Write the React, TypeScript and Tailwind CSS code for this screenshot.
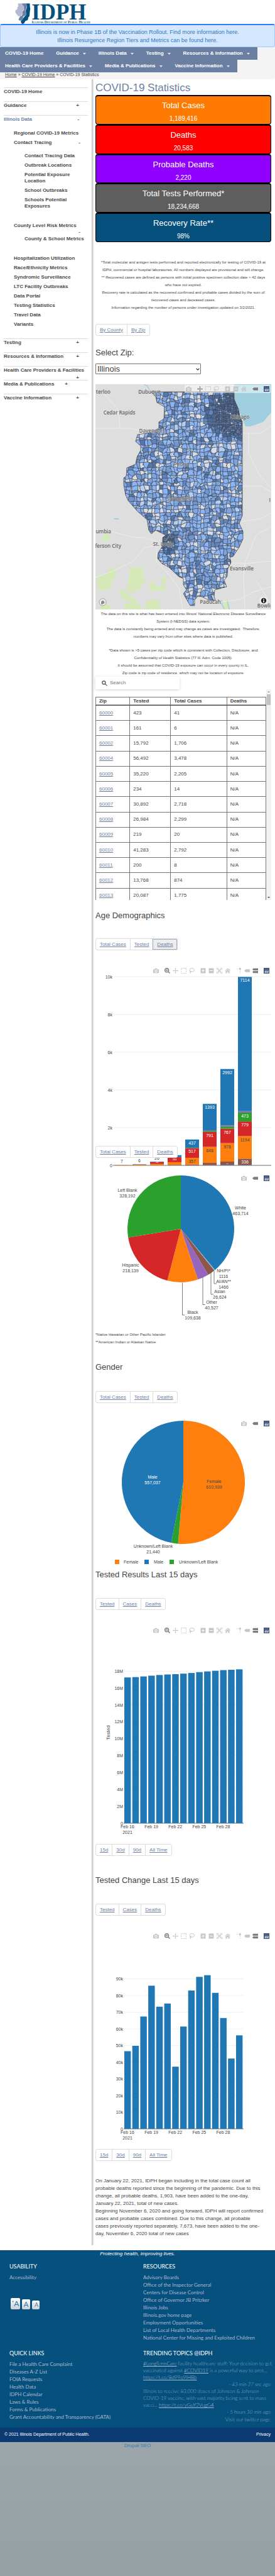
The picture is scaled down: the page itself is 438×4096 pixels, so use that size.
import React from "react";

const BLUE = "#1f77b4";
const ORANGE = "#ff7f0e";
const GREEN = "#2ca02c";
const RED = "#d62728";
const PURPLE = "#9467bd";
const BROWN = "#8c564b";

/* ---------- Header ---------- */

function Logo() {
  return (
    <svg viewBox="0 0 720 205" className="block h-[38px] w-[134px]" role="img" aria-label="IDPH, Illinois Department of Public Health">
      <path d="M98 30H163L164 60L167 75L164 95L160 138L150 150L145 172L126 180L112 202L98 205L88 196L86 180L96 165L112 150L128 128L122 112L130 85L138 62L126 42Z" fill="#05507d" />
      <path d="M84 30H130L138 52L134 72L126 90L132 118L128 132L108 142L104 160L92 176L76 178L66 168L72 152L80 140L58 138L60 134L92 136L100 120L94 104L112 84L110 60Z" fill="#6b7fa6" stroke="#e6e9f2" strokeWidth="2" />
      <path d="M60 30H96L94 38L110 52L112 84L96 96L100 118L84 137L60 134L48 122L37 102L40 88L56 78L54 68L64 52Z" fill="#b4b9d2" stroke="#e6e9f2" strokeWidth="2" />
      <text x="178" y="166" fontSize="188" fontWeight="700" fill="#05507d" fontFamily="Liberation Serif, serif">IDPH</text>
      <text x="179" y="200" fontSize="30" fontWeight="700" fill="#2a6389" fontFamily="Liberation Serif, serif" style={{ fontVariant: "small-caps" }}>
        Illinois Department of Public Health
      </text>
    </svg>
  );
}

const navItems = [
  { label: "COVID-19 Home", sub: false },
  { label: "Guidance", sub: true },
  { label: "Illinois Data", sub: true },
  { label: "Testing", sub: true },
  { label: "Resources & Information", sub: true },
  { label: "Health Care Providers & Facilities", sub: true },
  { label: "Media & Publications", sub: true },
  { label: "Vaccine Information", sub: true },
];

function Header() {
  return (
    <header>
      <div className="h-[38px] pl-[17px]">
        <Logo />
      </div>
      <div className="h-[37px] rounded-[3px] border border-t-2 border-[#9ec8fb] border-t-[#2f7bff] bg-[#d4e7ff] pt-[5px] text-center text-[9px] leading-[13px] text-[#337ab7]">
        <a href="#vaccination" className="block">Illinois is now in Phase 1B of the Vaccination Rollout. Find more information here.</a>
        <a href="#regions" className="block">Illinois Resurgence Region Tiers and Metrics can be found here.</a>
      </div>
      <div className="rounded-b-[3px] bg-[#f4f4f4]">
        <nav aria-label="Main">
          <ul className="flex flex-wrap">
            {navItems.map((n) => (
              <li key={n.label} className="bg-[#6b7fa3]">
                <a href="#menu" className="flex h-[20px] items-center pr-[12px] pl-[8px] text-[8px] font-bold whitespace-nowrap text-white">
                  {n.label}
                  {n.sub && (
                    <svg viewBox="0 0 10 6" className="ml-[6px] h-[3px] w-[5px]" aria-hidden="true">
                      <path d="M0 0H10L5 6Z" fill="#e6e6ee" />
                    </svg>
                  )}
                </a>
              </li>
            ))}
          </ul>
        </nav>
        <p className="h-[11px] pl-[8px] text-[7px] leading-[8px] text-[#444]">
          <a href="#home" className="underline">Home</a> » <a href="#covid" className="underline">COVID-19 Home</a> » COVID-19 Statistics
        </p>
      </div>
    </header>
  );
}

/* ---------- Sidebar ---------- */

function TopItem({ label, sign, active, near }: { label: string; sign?: string; active?: boolean; near?: boolean }) {
  return (
    <div className={"h-[22px] border-t border-[#ddd] text-[8px] leading-[12px] font-bold " + (active ? "text-[#6b7fa3]" : "text-[#4a4a4a]")}>
      <div className={"flex flex-wrap justify-between " + (near ? "pr-[32px]" : "pr-[14px]")}>
        <a href="#section" className="whitespace-nowrap">{label}</a>
        {sign && <span className="ml-auto text-[#4a4a4a]">{sign}</span>}
      </div>
    </div>
  );
}

function Sidebar() {
  const link = "block";
  return (
    <aside className="w-1/3 shrink-0 pt-[13px] pr-[6px] pl-[6px]">
      <TopItem label="COVID-19 Home" />
      <TopItem label="Guidance" sign="+" />
      <TopItem label="Illinois Data" sign="-" active />
      <ul className="mt-[2px] mb-[17px] flex flex-col gap-[5px] pl-[16px] text-[8px] leading-[10px] font-bold text-[#4a4a4a]">
        <li><a href="#x" className={link}>Regional COVID-19 Metrics</a></li>
        <li>
          <div className="flex justify-between pr-[12px]"><a href="#x">Contact Tracing</a><span>-</span></div>
          <ul className="mt-[11px] mb-[16px] flex flex-col gap-[5px] pl-[17px]">
            <li><a href="#x" className={link}>Contact Tracing Data</a></li>
            <li><a href="#x" className={link}>Outbreak Locations</a></li>
            <li><a href="#x" className={link}>Potential Exposure<br />Location</a></li>
            <li><a href="#x" className={link}>School Outbreaks</a></li>
            <li><a href="#x" className={link}>Schools Potential<br />Exposures</a></li>
          </ul>
        </li>
        <li>
          <a href="#x" className={link}>County Level Risk Metrics</a>
          <div className="pr-[12px] text-right">-</div>
          <ul className="mt-px mb-[16px] pl-[17px]">
            <li><a href="#x" className="block whitespace-nowrap">County &amp; School Metrics</a></li>
          </ul>
        </li>
        {["Hospitalization Utilization", "Race/Ethnicity Metrics", "Syndromic Surveillance", "LTC Facility Outbreaks", "Data Portal", "Testing Statistics", "Travel Data", "Variants"].map((t) => (
          <li key={t}><a href="#x" className={link}>{t}</a></li>
        ))}
      </ul>
      <TopItem label="Testing" sign="+" />
      <TopItem label="Resources & Information" sign="+" />
      <TopItem label="Health Care Providers & Facilities" sign="+" />
      <TopItem label="Media & Publications" sign="+" near />
      <TopItem label="Vaccine Information" sign="+" />
    </aside>
  );
}

/* ---------- Small shared parts ---------- */

function ButtonGroup({ items, active, className }: { items: string[]; active?: string; className?: string }) {
  return (
    <div className={"flex h-[19px] w-fit rounded-[3px] border border-[#ddd] bg-white " + (className ?? "")}>
      {items.map((t, i) => (
        <a
          key={t}
          href="#data"
          className={
            "flex items-center px-[6px] text-[8px] text-[#6b7fa3] underline " +
            (i > 0 ? "border-l border-[#ddd] " : "") +
            (active === t ? "bg-[#eee] outline-1 outline-dotted -outline-offset-1 outline-[#5a6c92]" : "")
          }
        >
          {t}
        </a>
      ))}
    </div>
  );
}

type IconName = "camera" | "zoom" | "pan" | "box" | "lasso" | "in" | "out" | "auto" | "home" | "spike" | "closest" | "compare" | "logo";

function Icon({ name }: { name: IconName }) {
  switch (name) {
    case "camera":
      return (
        <>
          <path fillRule="evenodd" d="M1 4H4.5L5.5 1.5H10.5L11.5 4H15Q16 4 16 5V13.5Q16 14.5 15 14.5H1Q0 14.5 0 13.5V5Q0 4 1 4ZM8 5A4 4 0 1 0 8 13A4 4 0 1 0 8 5Z" />
          <circle cx="8" cy="9" r="2.2" />
        </>
      );
    case "zoom":
      return (
        <>
          <path fillRule="evenodd" d="M6.5 0A6.5 6.5 0 1 0 6.5 13A6.5 6.5 0 1 0 6.5 0ZM3 3H10V10H3Z" />
          <path d="M4.6 4.6H8.4V8.4H4.6Z" />
          <path d="M10 12L12 10L16 14L14.2 16Z" />
        </>
      );
    case "pan":
      return <path d="M8 0L10.6 3H8.8V7.2H13V5.4L16 8L13 10.6V8.8H8.8V13H10.6L8 16L5.4 13H7.2V8.8H3V10.6L0 8L3 5.4V7.2H7.2V3H5.4Z" />;
    case "box":
      return <path d="M0 0H2V2H0ZM4 0H6V2H4ZM8 0H10V2H8ZM11 0H13V2H11ZM14 0H16V2H14ZM0 4H2V6H0ZM14 4H16V6H14ZM0 9H2V11H0ZM14 9H16V11H14ZM0 14H2V16H0ZM4 14H6V16H4ZM8 14H10V16H8ZM11 14H13V16H11ZM14 14H16V16H14Z" />;
    case "lasso":
      return (
        <g fill="none" stroke="currentColor" strokeWidth="1.7">
          <ellipse cx="8.5" cy="6" rx="6.6" ry="5" />
          <circle cx="4" cy="10.5" r="1.8" />
          <path d="M4 12Q5 14 3.5 16" />
        </g>
      );
    case "in":
      return <path fillRule="evenodd" d="M1 1H15V15H1ZM7 4V7H4V9H7V12H9V9H12V7H9V4Z" />;
    case "out":
      return <path fillRule="evenodd" d="M1 1H15V15H1ZM4 7V9H12V7Z" />;
    case "auto":
      return (
        <>
          <path d="M0 0H5V1.5H1.5V5H0ZM11 0H16V5H14.5V1.5H11ZM0 11H1.5V14.5H5V16H0ZM14.5 11H16V16H11V14.5H14.5Z" />
          <path d="M3 3H7L5.8 4.4L8 6.6L10.2 4.4L9 3H13V7L11.6 5.8L9.4 8L11.6 10.2L13 9V13H9L10.2 11.6L8 9.4L5.8 11.6L7 13H3V9L4.4 10.2L6.6 8L4.4 5.8L3 7Z" />
        </>
      );
    case "home":
      return <path d="M8 1L11.5 4.4V2H13.5V6.2L16 8.8L15 9.8L8 3.4L1 9.8L0 8.8ZM8 5L13.5 10V15H9.6V10.8H6.4V15H2.5V10Z" />;
    case "spike":
      return <path d="M1 2H3V4H1ZM5 2H7V4H5ZM9 3A2.4 2.4 0 1 1 13.5 3A2.4 2.4 0 1 1 9 3ZM10.5 8H12.5V10H10.5ZM10.5 12.5H12.5V14.5H10.5Z" />;
    case "closest":
      return <path d="M0 8L4 4H16V12H4Z" />;
    case "compare":
      return <path d="M0 4.5L2.5 1.5H16V7H2.5ZM0 12L2.5 9H16V14.5H2.5Z" />;
    case "logo":
      return (
        <>
          <rect width="16" height="16" fill="#3f4f75" />
          <path d="M3 9H4.6V14H3ZM6 7H7.6V14H6ZM9 9H10.6V14H9ZM12 7H13.6V14H12Z" fill="#fff" />
          <path d="M3 3H4.4V4.4H3ZM6 3H7.4V4.4H6ZM9 3H10.4V4.4H9ZM12 3H13.4V4.4H12ZM3 6H4.4V7.4H3ZM9 6H10.4V7.4H9Z" fill="#9fc5d8" />
        </>
      );
  }
}

const fullBar: IconName[][] = [["camera"], ["zoom", "pan", "box", "lasso"], ["in", "out", "auto", "home"], ["spike", "closest", "compare"], ["logo"]];
const mapBar: IconName[][] = [["camera"], ["pan", "box", "lasso"], ["in", "out", "home"], ["closest"], ["logo"]];
const pieBar: IconName[][] = [["camera"], ["closest"], ["logo"]];

function Modebar({ groups, on, className }: { groups: IconName[][]; on: IconName[]; className: string }) {
  return (
    <div className={"absolute right-[1px] flex gap-[5px] " + className}>
      {groups.map((g, i) => (
        <div key={i} className="flex">
          {g.map((n) => (
            <button key={n} type="button" aria-label={n} className={"flex h-[13px] items-center px-[2px] " + (on.includes(n) ? "text-[#7c7c7c]" : "text-[#c6c6c6]")}>
              <svg viewBox="0 0 16 16" fill="currentColor" className="h-[9px] w-[9px]"><Icon name={n} /></svg>
            </button>
          ))}
        </div>
      ))}
    </div>
  );
}

const chartText = "[&_text]:text-[7px]";

function T({ x, y, children, fill = "#444", anchor = "middle" }: { x: number; y: number; children: React.ReactNode; fill?: string; anchor?: "start" | "middle" | "end" }) {
  return <text x={x} y={y} dy="2.5" textAnchor={anchor} fill={fill}>{children}</text>;
}

/* ---------- Stat cards ---------- */

const cards = [
  { label: "Total Cases", value: "1,189,416", bg: "bg-[#ff7a00]" },
  { label: "Deaths", value: "20,583", bg: "bg-[#ff0000]" },
  { label: "Probable Deaths", value: "2,220", bg: "bg-[#9000ff]" },
  { label: "Total Tests Performed*", value: "18,234,668", bg: "bg-[#5e5e5e]" },
  { label: "Recovery Rate**", value: "98%", bg: "bg-[#05507d]" },
];

/* ---------- Zip map ---------- */

const outline =
  "M88 12L221 12L221 24L228 40L230 51L234 60L234 209L229 221L235 234L235 246L229 259L219 274L214 275L216 283L211 293L210 305L205 312L209 322L190 327L189 337L191 344L180 343L170 338L163 337L158 343L158 352L151 352L140 333L145 327L140 319L140 309L133 306L117 291L106 285L99 277L100 268L107 257L107 244L112 240L96 232L89 238L85 232L82 215L67 202L52 185L48 176L45 160L45 149L49 146L50 133L64 127L66 116L72 105L72 98L64 91L67 80L88 77L101 70L101 60L109 55L110 36L98 29L96 20Z";

function rnd(a: number, b: number, k: number) {
  const s = Math.sin(a * 127.1 + b * 311.7 + k * 74.7) * 43758.5453;
  return s - Math.floor(s);
}

function buildZips(size: number, salt: number, inside: (x: number, y: number) => boolean) {
  const cells: { d: string; fill: string }[] = [];
  const light = ["#d3dcec", "#b4cdf2", "#8ab4f8", "#8ab4f8", "#8ab4f8", "#8ab4f8", "#7ba4e2", "#7ba4e2", "#6f94d0", "#d8dde6", "#5f86c0", "#5378ae"];
  const dark = ["#4a6da3", "#5378ae", "#4a6da3", "#5f86c0", "#45659a"];
  const v = (i: number, j: number) => [(i + (rnd(i, j, salt) - 0.5) * 0.75) * size, (j + (rnd(i, j, salt + 1) - 0.5) * 0.75) * size];
  const mid = (a: number[], b: number[], i: number, j: number, k: number) => {
    const q = rnd(i, j, salt + k) > 0.5;
    const mx = a[0] * 0.5 + b[0] * 0.5;
    const my = a[1] * 0.5 + b[1] * 0.5;
    const w = (rnd(i, j, salt + k + 1) - 0.5) * size * 0.7;
    return q ? `L${(mx + w).toFixed(1)} ${(my - w * 0.2).toFixed(1)}L${(mx + w).toFixed(1)} ${(my + w * 0.5).toFixed(1)}` : `L${mx.toFixed(1)} ${(my + w).toFixed(1)}`;
  };
  const rev = (m: string) => m.split("L").filter(Boolean).reverse().map((p) => "L" + p).join("");
  const p = (a: number[]) => `${a[0].toFixed(1)} ${a[1].toFixed(1)}`;
  for (let j = 0; j * size < 356; j++) {
    for (let i = 0; i * size < 240; i++) {
      const cx = (i + 0.5) * size;
      const cy = (j + 0.5) * size;
      if (!inside(cx, cy)) continue;
      const a = v(i, j), b = v(i + 1, j), c = v(i + 1, j + 1), e = v(i, j + 1);
      const top = mid(a, b, i, j, 5);
      const right = mid(b, c, i + 1, j, 9);
      const bottom = rev(mid(e, c, i, j + 1, 5));
      const left = rev(mid(a, e, i, j, 9));
      const near = Math.hypot(cx - 222, cy - 45) < 46 || Math.hypot(cx - 115, cy - 252) < 18;
      const set = near && rnd(i, j, 33) > 0.15 ? dark : light;
      cells.push({ d: `M${p(a)}${top}L${p(b)}${right}L${p(c)}${bottom}L${p(e)}${left}Z`, fill: set[Math.floor(rnd(i, j, salt + 17) * set.length)] });
    }
  }
  return cells;
}

const dense = (x: number, y: number) => (Math.hypot((x - 222) / 0.9, y - 46) < 36 && x > 190) || Math.hypot(x - 114, y - 253) < 12;
const zips = [...buildZips(6, 3, () => true), ...buildZips(3, 8, dense)];

const cities: [string, number, number, "start" | "middle" | "end"][] = [
  ["terloo", 24, 12, "end"],
  ["Dubuque", 86, 12, "middle"],
  ["Cedar Rapids", 38, 45, "middle"],
  ["Davenport", 90, 74, "middle"],
  ["Chicago", 230, 52, "middle"],
  ["Peoria", 137, 127, "middle"],
  ["Springfield", 134, 182, "middle"],
  ["umbia", 25, 234, "end"],
  ["ferson City", 41, 257, "end"],
  ["St. Louis", 108, 254, "middle"],
  ["Evansville", 233, 293, "middle"],
  ["Paducah", 183, 346, "middle"],
  ["Bowli", 279, 352, "end"],
  ["I", 279, 184, "end"],
];

function ZipMap() {
  return (
    <div className="relative mt-[16px] overflow-hidden bg-[#dedede]">
      <svg viewBox="0 0 280 358" className="block w-full" role="img" aria-label="Map of cases by zip code">
        <clipPath id="state"><path d={outline} /></clipPath>
        <path d="M221 0H280V45L267 60L247 67L239 67L228 40L221 24Z" fill="#9fcfdf" />
        <path d="M77 0L83 3L86 9M200 343L208 358" stroke="#9fcfdf" strokeWidth="1.5" fill="none" />
        <path d="M29 213H37V215H30Z" fill="#9fcfdf" />
        <g fill="#d4e8b8">
          <path d="M14 237L23 239V247L15 250L10 249L12 243Z" />
          <path d="M20 293H32V309L26 312L24 325H16L11 330L3 322V303L18 303L20 300Z" />
          <path d="M55 291H76V309L81 315L73 318V327H63L61 332H55L50 325L54 305Z" />
          <path d="M86 316L90 313L97 322H106V308L113 306L110 321L113 328H86Z" />
          <path d="M38 325L50 330L54 338L65 342L68 349L75 356L70 358H46L46 349H54L57 347L44 342L39 332Z" />
          <path d="M80 349L85 343H102V354L106 358H80Z" />
          <path d="M7 358V354L14 350H23V355L26 358Z" />
          <path d="M202 345L209 344L212 358H205Z" />
        </g>
        <path d="M198 345L206 358M210 344L213 358" stroke="#9fcfdf" strokeWidth="1.5" fill="none" />
        <g fill="none" stroke="#f2f2f2" strokeWidth="0.7">
          <path d="M0 70H55L80 76L100 76M14 16L36 40L39 70" />
          <path d="M0 307L30 296L60 282L78 260L101 256M24 234L60 243L78 244L98 250M98 258L97 282L115 300L133 324L139 358" />
          <path d="M234 78H262L280 66M244 78V110L262 145L280 165M234 162H265L280 172M234 218L262 214L280 205" />
          <path d="M216 284L240 285L280 281M280 226L256 240L238 284L236 306L238 358M190 348L230 342L252 330L280 322M256 312L280 350" />
        </g>
        <g clipPath="url(#state)">
          <rect width="280" height="358" fill="#b8b8b8" />
          <g stroke="#454545" strokeWidth="0.6">
            {zips.map((z, i) => <path key={i} d={z.d} fill={z.fill} />)}
          </g>
        </g>
        <path d={outline} fill="none" stroke="#484848" strokeWidth="0.7" />
        <g fill="none" stroke="#fff" strokeOpacity="0.45" strokeWidth="0.5">
          <path d="M100 90L160 93L190 92L214 68L234 60M166 20L164 110L158 150M101 64L144 56L190 62L225 62M172 32L210 44L228 56" />
          <path d="M102 80V130L130 140L165 152L175 140L205 68M165 152L142 176L134 215L112 250M52 188L108 190L140 185M198 80L197 200L180 235L166 255L166 300L180 343" />
          <path d="M107 246L140 240L200 215L234 209M112 256L150 272L210 277" />
        </g>
        <g fontFamily="Open Sans, Noto Sans, sans-serif" fontWeight="600" fill="#666" stroke="#e2e2e2" strokeWidth="1" paintOrder="stroke" strokeOpacity="0.6" className="[&_text]:text-[8px]">
          {cities.map(([n, x, y, a]) => <text key={n} x={x} y={y} dy="3" textAnchor={a}>{n}</text>)}
        </g>
        <circle cx="11.500" cy="346.500" r="5.500" fill="#f4f4f4" stroke="#8a8a8a" strokeWidth="0.8" />
        <path d="M9 350V346A2.800 2.800 0 1 1 12 349.500Z" fill="#8a8a8a" />
        <circle cx="268" cy="344" r="6.500" fill="#fff" fillOpacity="0.5" />
        <circle cx="268" cy="344" r="4.200" fill="#222" />
        <path d="M267.200 343.500H268.800V346.900H267.200ZM267.200 341.100H268.800V342.500H267.200Z" fill="#fff" />
      </svg>
      <Modebar groups={mapBar} on={["pan", "closest"]} className="top-[1px] bg-white/50" />
    </div>
  );
}

/* ---------- Table ---------- */

const zipRows = [
  ["60000", "423", "41"], ["60001", "161", "6"], ["60002", "15,792", "1,706"], ["60004", "56,492", "3,478"],
  ["60005", "35,220", "2,205"], ["60006", "234", "14"], ["60007", "30,892", "2,718"], ["60008", "26,984", "2,299"],
  ["60009", "219", "20"], ["60010", "41,283", "2,792"], ["60011", "200", "8"], ["60012", "13,768", "874"],
  ["60013", "20,087", "1,775"],
];

function ZipTable() {
  const cell = "border border-[#777] pl-[5px]";
  const head = "border border-[#777] border-b-[#444] pl-[5px] shadow-[inset_0_-1px_0_#aaa]";
  return (
    <div className="flex h-[335px] overflow-hidden">
      <div className="min-w-0 flex-1 pt-[12px]">
        <table className="h-[329px] w-full table-fixed border-collapse text-left text-[8px] text-[#444]">
          <colgroup><col className="w-[20%]" /><col className="w-[24%]" /><col className="w-[33%]" /><col className="w-[23%]" /></colgroup>
          <thead>
            <tr><th className={head}>Zip</th><th className={head}>Tested</th><th className={head}>Total Cases</th><th className={head}>Deaths</th></tr>
          </thead>
          <tbody>
            {zipRows.map(([z, t, c]) => (
              <tr key={z}>
                <td className={cell}><a href="#zip" className="text-[#6b7fa3] underline">{z}</a></td>
                <td className={cell}>{t}</td>
                <td className={cell}>{c}</td>
                <td className={cell}>N/A</td>
              </tr>
            ))}
          </tbody>
        </table>
      </div>
      <div className="flex w-[8px] flex-col items-center justify-between bg-[#f1f1f1] py-[3px]">
        <div className="flex flex-col items-center gap-[3px]">
          <svg viewBox="0 0 4 2" className="h-[2px] w-[4px]"><path d="M0 2H4L2 0Z" fill="#999" /></svg>
          <div className="h-[17px] w-[6px] bg-[#c1c1c1]" />
        </div>
        <svg viewBox="0 0 4 2" className="h-[2px] w-[4px]"><path d="M0 0H4L2 2Z" fill="#444" /></svg>
      </div>
    </div>
  );
}

/* ---------- Charts ---------- */

const stacks: [number, string][][] = [
  [[22, ORANGE]],
  [[35, ORANGE], [16, RED], [10, BLUE]],
  [[75, ORANGE], [108, RED], [20, BLUE]],
  [[25, BROWN], [145, ORANGE], [263, RED], [8, GREEN], [100, BLUE]],
  [[45, BROWN], [357, ORANGE], [517, RED], [15, GREEN], [437, BLUE]],
  [[12, BLUE], [120, BROWN], [848, ORANGE], [791, RED], [60, GREEN], [36, PURPLE], [1393, BLUE]],
  [[20, BLUE], [180, BROWN], [978, ORANGE], [767, RED], [117, GREEN], [54, PURPLE], [2992, BLUE]],
  [[20, BLUE], [336, BROWN], [1194, ORANGE], [779, RED], [473, GREEN], [72, PURPLE], [7114, BLUE]],
];

function AgeChart() {
  return (
    <svg viewBox="0 0 280 328" className={"block w-full " + chartText} role="img" aria-label="Deaths by age group">
      {[0, 2, 4, 6, 8, 10].map((k) => (
        <g key={k}>
          <path d={`M28 ${321 - k * 30}H280`} stroke={k ? "#eee" : "#444"} strokeWidth={k ? 1 : 0.8} />
          <T x={27} y={321 - k * 30} anchor="end">{k ? `${k}k` : "0"}</T>
        </g>
      ))}
      {stacks.map((s, i) => {
        const x = 31 + i * 28;
        let base = 0;
        return s.map(([v, color], j) => {
          const h = v * 0.03;
          const y = 321 - base * 0.03 - h;
          base += v;
          return (
            <g key={`${i}-${j}`}>
              <rect x={x} y={y} width={22} height={h} fill={color} />
              {v > 330 && <T x={x + 11} y={y + (h < 11 ? h / 2 : 5.5)} fill={color === ORANGE ? "#444" : "#fff"}>{v}</T>}
            </g>
          );
        });
      })}
      <T x={42} y={314}>7</T>
      <T x={70} y={313}>6</T>
      <T x={98} y={309}>26</T>
      <g fill="#fff" textAnchor="middle">
        <text x="98" y="317" style={{ fontSize: 3 }}>108</text>
        <text x="126" y="313" style={{ fontSize: 4 }}>263</text>
        <text x="210" y="319" style={{ fontSize: 2 }}>205</text>
      </g>
    </svg>
  );
}

function slices(cx: number, cy: number, r: number, data: [number, string][]) {
  const total = data.reduce((s, d) => s + d[0], 0);
  let a = 0;
  return data.map(([v, color], i) => {
    const b = a + (v / total) * Math.PI * 2;
    const d = `M${cx} ${cy}L${cx + r * Math.sin(a)} ${cy - r * Math.cos(a)}A${r} ${r} 0 ${b - a > Math.PI ? 1 : 0} 1 ${cx + r * Math.sin(b)} ${cy - r * Math.cos(b)}Z`;
    a = b;
    return <path key={i} d={d} fill={color} />;
  });
}

function Pair({ x, y, a, b, fill }: { x: number; y: number; a: string; b: string; fill?: string }) {
  return (
    <>
      <T x={x} y={y} fill={fill}>{a}</T>
      <T x={x} y={y + 9} fill={fill}>{b}</T>
    </>
  );
}

function RacePie() {
  return (
    <svg viewBox="0 0 280 250" className={"block w-full " + chartText} role="img" aria-label="Cases by race">
      {slices(136, 94, 85, [[463714, BLUE], [1116, "#e8f0f5"], [1466, "#4a9cb0"], [26624, BROWN], [40527, PURPLE], [109638, ORANGE], [218139, RED], [328192, GREEN]])}
      <Pair x={51} y={32} a="Left Blank" b="328,192" />
      <Pair x={231} y={60} a="White" b="463,714" />
      <Pair x={56} y={151} a="Hispanic" b="218,139" />
      <Pair x={204} y={160} a="NH/PI*" b="1116" />
      <Pair x={204} y={177} a="AI/AN**" b="1466" />
      <Pair x={198} y={193} a="Asian" b="26,624" />
      <Pair x={185} y={210} a="Other" b="40,527" />
      <Pair x={155} y={226} a="Black" b="109,638" />
      <path d="M138.500 179.500V231H142.500M171 171V214.500H175M184 163.500V198H188M189 161V181H193" fill="none" stroke="#444" strokeWidth="0.7" />
    </svg>
  );
}

function GenderPie() {
  return (
    <svg viewBox="0 0 280 240" className={"block w-full " + chartText} role="img" aria-label="Cases by gender">
      {slices(140, 105, 98, [[610939, ORANGE], [21440, GREEN], [557037, BLUE]])}
      <Pair x={91} y={96} a="Male" b="557,037" fill="#fff" />
      <Pair x={189} y={103} a="Female" b="610,939" />
      <Pair x={92} y={206} a="Unknown/Left Blank" b="21,440" />
      <rect x="31" y="228" width="7" height="7" fill={ORANGE} />
      <T x={45} y={231.5} anchor="start">Female</T>
      <rect x="78" y="228" width="7" height="7" fill={BLUE} />
      <T x={93} y={231.5} anchor="start">Male</T>
      <rect x="118" y="228" width="7" height="7" fill={GREEN} />
      <T x={133} y={231.5} anchor="start">Unknown/Left Blank</T>
    </svg>
  );
}

function DailyChart({ values, step, count, unit, px, title }: { values: number[]; step: number; count: number; unit: string; px: number; title?: string }) {
  return (
    <svg viewBox="0 0 280 342" className={"block w-full " + chartText} role="img" aria-label="Daily testing chart">
      {Array.from({ length: count }, (_, i) => (
        <g key={i}>
          <path d={`M45 ${319 - i * step * px}H236`} stroke={i ? "#eee" : "#444"} strokeWidth="0.8" />
          <T x={44} y={319 - i * step * px} anchor="end">{i ? `${i * step}${unit}` : "0"}</T>
        </g>
      ))}
      {values.map((v, i) => (
        <rect key={i} x={46 + i * 12.71} y={319 - v * px} width={10.4} height={v * px} fill={BLUE} />
      ))}
      {["Feb 16", "Feb 19", "Feb 22", "Feb 25", "Feb 28"].map((d, i) => (
        <T key={d} x={51 + i * 38.1} y={324}>{d}</T>
      ))}
      <T x={51} y={333}>2021</T>
      {title && <text transform="translate(23 175) rotate(-90)" textAnchor="middle" fill="#444" style={{ fontSize: 8 }}>{title}</text>}
    </svg>
  );
}

const tested = [17.27, 17.31, 17.39, 17.48, 17.56, 17.62, 17.66, 17.72, 17.8, 17.9, 17.98, 18.06, 18.14, 18.18, 18.23];
const change = [46.6, 49.8, 67.4, 85.9, 73.3, 75.2, 37.3, 61.4, 83, 91.2, 92.2, 81.6, 66.5, 42.2, 56.1];

const h2 = "text-[13px] leading-[16px] text-[#444]";

function Main() {
  return (
    <main className="min-w-0 flex-1 bg-[linear-gradient(to_right,#bbb_0,#fff_4px)] pr-[6px] pb-[12px] pl-[6px]">
      <h1 className="h-[25px] text-[17px] leading-[27px] text-[#6b7fa3]">COVID-19 Statistics</h1>
      <div className="grid h-[234px] grid-rows-5">
        {cards.map((c) => (
          <section key={c.label} className={"rounded-[4px] border border-t-2 border-black pt-[7px] text-center text-white " + c.bg}>
            <h2 className="text-[13px] leading-[16px]">{c.label}</h2>
            <p className="mt-[5px] text-[10px] leading-[16px]">{c.value}</p>
          </section>
        ))}
      </div>
      <p className="mt-[26px] text-center text-[6px] leading-[12px] whitespace-nowrap text-[#444]">
        *Total molecular and antigen tests performed and reported electronically for testing of COVID-19 at<br />
        IDPH, commercial or hospital laboratories. All numbers displayed are provisional and will change.<br />
        ** Recovered cases are defined as persons with initial positive specimen collection date &gt; 42 days<br />
        who have not expired.<br />
        Recovery rate is calculated as the recovered confirmed and probable cases divided by the sum of<br />
        recovered cases and deceased cases.<br />
        Information regarding the number of persons under investigation updated on 3/2/2021.
      </p>
      <ButtonGroup items={["By County", "By Zip"]} className="mt-[20px]" />
      <label htmlFor="zip" className={"mt-[19px] block " + h2}>Select Zip:</label>
      <div className="relative mt-[9px] w-3/5">
        <select id="zip" className="block h-[17px] w-full appearance-none rounded-[1px] border border-[#767676] bg-white pl-[2px] text-[13px] leading-[15px] text-[#444]">
          <option>Illinois</option>
        </select>
        <svg viewBox="0 0 10 6" className="pointer-events-none absolute top-[7px] right-[2px] h-[4px] w-[6px]" aria-hidden="true">
          <path d="M1 1L5 5L9 1" fill="none" stroke="#333" strokeWidth="2" />
        </svg>
      </div>
      <ZipMap />
      <div className="mt-px text-center text-[6px] leading-[12px] whitespace-nowrap text-[#444]">
        <p>
          The data on this site is what has been entered into Illinois' National Electronic Disease Surveillance<br />
          System (I-NEDSS) data system.<br />
          The data is constantly being entered and may change as cases are investigated.&nbsp; Therefore,<br />
          numbers may vary from other sites where data is published.
        </p>
        <p className="mt-[10px]">
          *Data shown is &gt;5 cases per zip code which is consistent with Collection, Disclosure, and<br />
          Confidentiality of Health Statistics (77 Ill. Adm. Code 1005).<br />
          It should be assumed that COVID-19 exposure can occur in every county in IL.<br />
          Zip code is zip code of residence, which may not be location of exposure.
        </p>
      </div>
      <label className="flex h-[20px] w-[134px] items-center rounded-[2px] bg-white pl-[10px] shadow-[0_1px_4px_rgba(0,0,0,0.18)]">
        <svg viewBox="0 0 16 16" className="h-[9px] w-[9px]" fill="none" stroke="#444" strokeWidth="2" aria-hidden="true">
          <circle cx="6" cy="6" r="4.500" />
          <path d="M9.500 9.500L15 15" />
        </svg>
        <span className="sr-only">Search</span>
        <input type="search" placeholder="Search" className="ml-[4px] w-[90px] text-[8px] outline-none placeholder:text-[#757575]" />
      </label>
      <ZipTable />

      <h2 className={"mt-[17px] " + h2}>Age Demographics</h2>
      <ButtonGroup items={["Total Cases", "Tested", "Deaths"]} active="Deaths" className="mt-[28px]" />
      <div className="relative mt-[21px]">
        <AgeChart />
        <Modebar groups={fullBar} on={["zoom", "compare"]} className="top-[5px]" />
        <ButtonGroup items={["Total Cases", "Tested", "Deaths"]} className="absolute bottom-[19px] left-0" />
      </div>
      <div className="relative">
        <RacePie />
        <Modebar groups={pieBar} on={["closest"]} className="top-[7px]" />
      </div>
      <p className="mt-[6px] text-[6px] leading-[12px] text-[#444]">
        *Native Hawaiian or Other Pacific Islander<br />
        **American Indian or Alaskan Native
      </p>

      <h2 className={"mt-[26px] " + h2}>Gender</h2>
      <ButtonGroup items={["Total Cases", "Tested", "Deaths"]} className="mt-[30px]" />
      <div className="relative mt-[21px]">
        <GenderPie />
        <Modebar groups={pieBar} on={["closest"]} className="top-[5px]" />
      </div>

      <h2 className={"mt-[4px] " + h2}>Tested Results Last 15 days</h2>
      <ButtonGroup items={["Tested", "Cases", "Deaths"]} className="mt-[29px]" />
      <div className="relative mt-[20px]">
        <DailyChart values={tested} step={2} count={10} unit="M" px={13.42} title="Tested" />
        <Modebar groups={fullBar} on={["zoom", "compare"]} className="top-[6px]" />
      </div>
      <ButtonGroup items={["15d", "30d", "90d", "All Time"]} className="mt-[10px]" />

      <h2 className={"mt-[31px] " + h2}>Tested Change Last 15 days</h2>
      <ButtonGroup items={["Tested", "Cases", "Deaths"]} className="mt-[29px]" />
      <div className="relative mt-[20px]">
        <DailyChart values={change} step={10} count={10} unit="k" px={2.65} />
        <Modebar groups={fullBar} on={["zoom", "compare"]} className="top-[6px]" />
      </div>
      <ButtonGroup items={["15d", "30d", "90d", "All Time"]} className="mt-[9px]" />

      <p className="mt-[26px] text-[8px] leading-[12px] whitespace-nowrap text-[#444]">
        On January 22, 2021, IDPH began including in the total case count all<br />
        probable deaths reported since the beginning of the pandemic. Due to this<br />
        change, all probable deaths, 1,903, have been added to the one-day,<br />
        January 22, 2021, total of new cases.<br />
        Beginning November 6, 2020 and going forward, IDPH will report confirmed<br />
        cases and probable cases combined. Due to this change, all probable<br />
        cases previously reported separately, 7,673, have been added to the one-<br />
        day, November 6, 2020 total of new cases
      </p>
    </main>
  );
}

/* ---------- Footer ---------- */

const resources = ["Advisory Boards", "Office of the Inspector General", "Centers for Disease Control", "Office of Governor JB Pritzker", "Illinois Jobs", "Illinois.gov home page", "Employment Opportunities", "List of Local Health Departments", "National Center for Missing and Exploited Children"];
const quick = ["File a Health Care Complaint", "Diseases A-Z List", "FOIA Requests", "Health Data", "IDPH Calendar", "Laws & Rules", "Forms & Publications", "Grant Accountability and Transparency (GATA)"];

function FooterList({ title, items }: { title: string; items: string[] }) {
  return (
    <section>
      <h3 className="text-[9px] leading-[12px] text-white">{title}</h3>
      <ul className="mt-[5px] text-[8px] leading-[12px] whitespace-nowrap text-[#a9b8d0]">
        {items.map((t) => <li key={t}><a href="#link">{t}</a></li>)}
      </ul>
    </section>
  );
}

function Footer() {
  const key = "flex items-center justify-center rounded-[2px] bg-linear-to-b from-white to-[#c9ced3] text-[#1f78b0]";
  return (
    <footer>
      <div className="h-[282px] bg-[#05507d]">
        <p className="text-center text-[8px] leading-[12px] text-white italic">Protecting health, improving lives.</p>
        <div className="grid grid-cols-[1fr_210px] pt-[8px] pl-[15px] font-[Lato,sans-serif]">
          <div>
            <FooterList title="USABILITY" items={["Accessibility"]} />
            <div className="mt-[27px] flex items-end gap-[3px] pl-[2px]">
              <button type="button" aria-label="Larger text" className={key + " h-[18px] w-[15px] text-[12px]"}><sup className="text-[6px]">+</sup>A</button>
              <button type="button" aria-label="Default text" className={key + " h-[16px] w-[13px] text-[11px]"}>A</button>
              <button type="button" aria-label="Smaller text" className={key + " h-[14px] w-[12px] text-[9px]"}><sup className="text-[6px]">-</sup>A</button>
            </div>
          </div>
          <FooterList title="RESOURCES" items={resources} />
        </div>
        <div className="grid grid-cols-[1fr_210px] pt-[13px] pl-[15px] font-[Lato,sans-serif]">
          <FooterList title="QUICK LINKS" items={quick} />
          <section className="pr-[7px]">
            <h3 className="text-[9px] leading-[12px] text-white">TRENDING TOPICS @IDPH</h3>
            <div className="mt-[5px] text-[8px] leading-[11px] font-light whitespace-nowrap text-[#86aecb]">
              <p>
                <a href="#t" className="text-[#a9b8d0] underline">#LongTermCare</a> facility healthcare staff: Your decision to get<br />
                vaccinated against <a href="#t" className="text-[#a9b8d0] underline">#COVID19</a> is a powerful way to prot…<br />
                <a href="#t" className="text-[#a9b8d0] underline">https://t.co/8d99q9lHBb</a>
              </p>
              <p className="text-right">- <em>43 min 27 sec</em> ago</p>
              <p>
                Illinois to receive 83,000 doses of Johnson &amp; Johnson<br />
                COVID-19 vaccine, with vast majority being sent to mass<br />
                vacci… <a href="#t" className="text-[#a9b8d0] underline">https://t.co/yGuY2VugG4</a>
              </p>
              <p className="text-right">- <em>5 hours 30 min</em> ago</p>
              <p className="text-right leading-[13px]"><a href="#t">Visit our twitter page</a></p>
            </div>
          </section>
        </div>
      </div>
      <div className="flex h-[23px] items-center justify-between bg-[#0c3a72] px-[7px] text-[7px] text-white">
        <span>© 2021 Illinois Department of Public Health.</span>
        <a href="#privacy">Privacy</a>
      </div>
      <div className="h-[215px] bg-linear-to-b from-[#9ba6ab] to-[#959fa4] text-center text-[8px] leading-[12px]">
        <a href="#seo" className="text-[#337ab7]">Drupal SEO</a>
      </div>
    </footer>
  );
}

export default function App() {
  return (
    <div className="bg-white font-['Liberation_Sans',Arial,sans-serif]">
      <Header />
      <div className="flex pb-[8px]">
        <Sidebar />
        <Main />
      </div>
      <Footer />
    </div>
  );
}
